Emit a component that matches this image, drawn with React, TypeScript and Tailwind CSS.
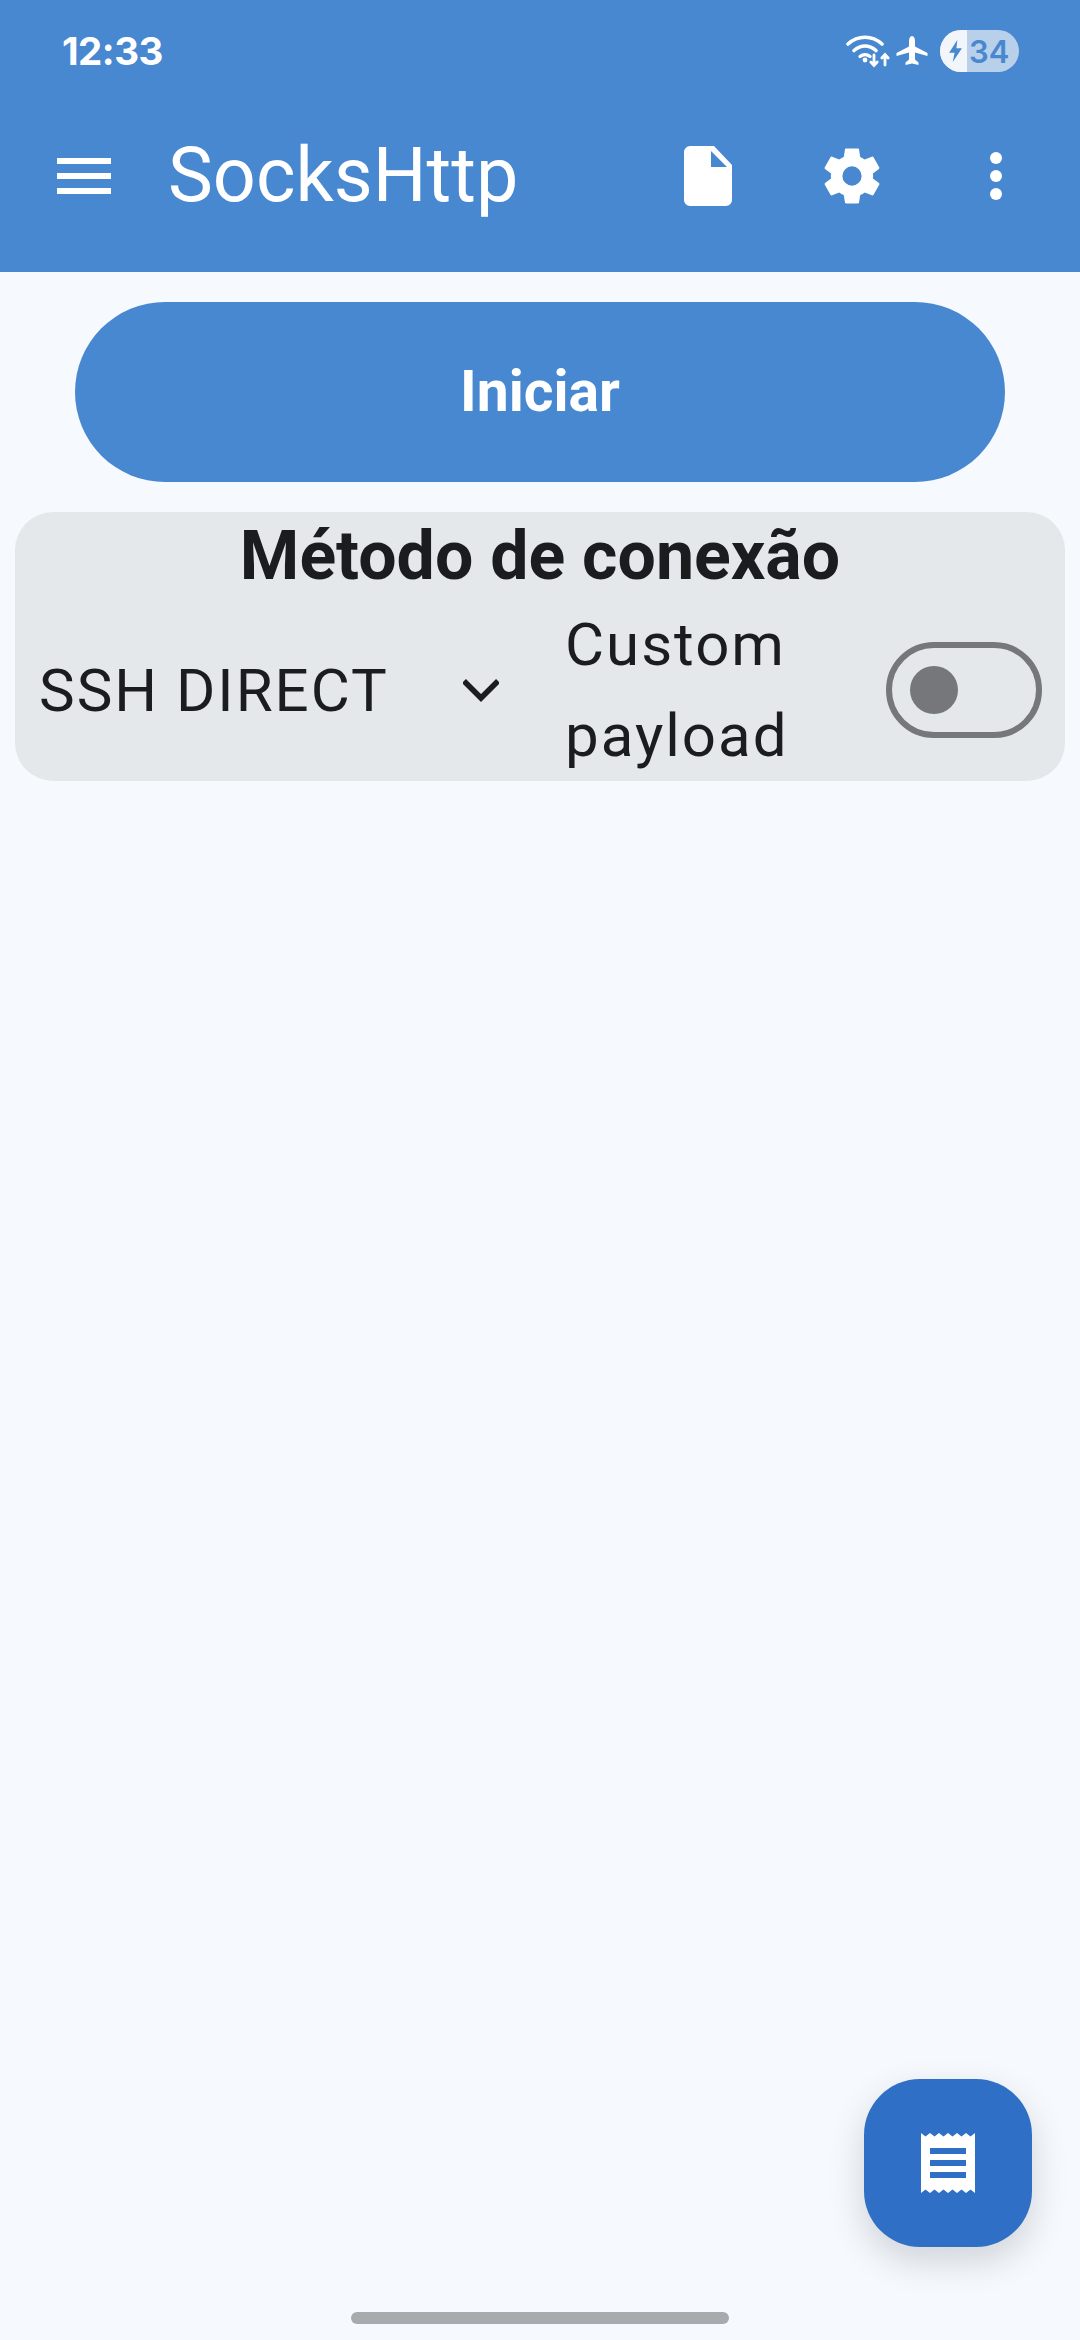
function WifiIcon() {
  return (
    <svg width="45" height="34" viewBox="0 0 45 34" fill="none" stroke="white" strokeLinecap="round">
      <path d="M2 10C12 1 26 1 36 10" strokeWidth="3.6" />
      <path d="M8 16.5C15 10.5 23 10.5 30 16.5" strokeWidth="3.6" />
      <path d="M14 22.5C17 20 21 20 24 22.5" strokeWidth="3.4" />
      <circle cx="19" cy="26" r="2.4" fill="white" stroke="none" />
      <path d="M28 21V31M24.8 28L28 31.5L31.2 28" strokeWidth="2.8" />
      <path d="M39 31V21M35.8 24L39 20.5L42.2 24" strokeWidth="2.8" />
    </svg>
  );
}

function PlaneIcon() {
  return (
    <svg width="32" height="30" viewBox="0 0 32 30" fill="white">
      <path d="M16 0C14 0 13 2.5 13 5V10.5L0.5 17V20L13 16.5V23.5L9.5 26.5V29L16 27.5L22.5 29V26.5L19 23.5V16.5L31.5 20V17L19 10.5V5C19 2.5 18 0 16 0Z" />
    </svg>
  );
}

function Battery() {
  return (
    <div className="ml-[7px] flex h-[42px] w-[79px] items-center overflow-hidden rounded-full bg-[#b9d0eb]">
      <div className="flex h-full w-[27px] items-center justify-end bg-[#f2f6fb] pr-[4px]">
        <svg width="15" height="22" viewBox="0 0 16 24" fill="#4888d0">
          <path d="M10 0L1 14H7L5 24L15 9H9L10 0Z" />
        </svg>
      </div>
      <span className="ml-[2px] font-['Inter',sans-serif] text-[31px] leading-none font-semibold text-[#4888d0]">34</span>
    </div>
  );
}

function StatusBar() {
  return (
    <div className="flex h-[102px] items-center justify-between pr-[61px] pl-[62px]">
      <span className="font-['Inter',sans-serif] text-[38.5px] leading-none font-bold tracking-[-0.5px] text-white">12:33</span>
      <div className="flex items-center gap-[5px]">
        <WifiIcon />
        <PlaneIcon />
        <Battery />
      </div>
    </div>
  );
}

function Toolbar() {
  return (
    <div className="flex h-[148px] items-center pr-[78px] pl-[57px]">
      <svg width="54" height="36" viewBox="0 0 54 36" fill="white">
        <rect x="0" y="0" width="54" height="6" />
        <rect x="0" y="15" width="54" height="6" />
        <rect x="0" y="30" width="54" height="6" />
      </svg>
      <h1 className="ml-[57px] font-['Roboto',sans-serif] text-[75.5px] leading-none font-normal text-white">SocksHttp</h1>
      <div className="ml-auto flex items-center">
        <svg width="48" height="60" viewBox="0 0 48 60" fill="white">
          <path fillRule="evenodd" d="M6 0H30L48 19V54C48 57 45 60 42 60H6C3 60 0 57 0 54V6C0 3 3 0 6 0ZM27 5V21H43L27 5Z" />
        </svg>
        <svg className="ml-[86px]" width="68" height="68" viewBox="0 0 24 24" fill="white">
          <path d="M19.4 12.9a7.6 7.6 0 0 0 0-1.8l2.1-1.6c.2-.2.2-.4.1-.6l-2-3.5c-.1-.2-.4-.3-.6-.2l-2.5 1a7.3 7.3 0 0 0-1.6-.9l-.4-2.6c0-.3-.2-.4-.5-.4h-4c-.3 0-.5.1-.5.4l-.4 2.6c-.6.2-1.1.6-1.6.9l-2.5-1c-.2-.1-.5 0-.6.2l-2 3.5c-.1.2-.1.5.1.6l2.1 1.6a7.6 7.6 0 0 0 0 1.8l-2.1 1.6c-.2.2-.2.4-.1.6l2 3.5c.1.2.4.3.6.2l2.5-1c.5.4 1 .7 1.6.9l.4 2.6c0 .3.2.4.5.4h4c.3 0 .5-.1.5-.4l.4-2.6c.6-.2 1.1-.6 1.6-.9l2.5 1c.2.1.5 0 .6-.2l2-3.5c.1-.2.1-.5-.1-.6l-2.1-1.6ZM12 15.4a3.4 3.4 0 1 1 0-6.8 3.4 3.4 0 0 1 0 6.8Z" />
        </svg>
        <div className="ml-[104px] flex flex-col gap-[6px]">
          <div className="size-[12px] rounded-full bg-white" />
          <div className="size-[12px] rounded-full bg-white" />
          <div className="size-[12px] rounded-full bg-white" />
        </div>
      </div>
    </div>
  );
}

function MethodCard() {
  return (
    <section className="mx-[15px] mt-[30px] h-[269px] rounded-[38px] bg-[#e5e8eb] pt-[5px]">
      <h2 className="text-center font-['Roboto',sans-serif] text-[68px] leading-[78px] font-bold text-[#1b1c1e]">Método de conexão</h2>
      <div className="mt-[4px] flex items-center pl-[24px] font-['Roboto',sans-serif] text-[60px] leading-[91px] tracking-[2px] text-[#1b1c1e]">
        <span className="w-[400px]">SSH DIRECT</span>
        <svg className="ml-[24px]" width="36" height="24" viewBox="0 0 36 24" fill="none" stroke="#1b1c1e" strokeWidth="5.5">
          <path d="M1 3L18 20L35 3" />
        </svg>
        <span className="ml-[66px] w-[321px]">
          Custom
          <br />
          payload
        </span>
        <button className="flex h-[96px] w-[156px] items-center rounded-full border-[6px] border-[#75777b] pl-[18px]">
          <span className="size-[48px] rounded-full bg-[#75777b]" />
        </button>
      </div>
    </section>
  );
}

export default function App() {
  return (
    <div className="relative flex h-[2340px] w-[1080px] flex-col overflow-hidden bg-[#f6fafe]">
      <header className="h-[272px] bg-[#4888d0]">
        <StatusBar />
        <Toolbar />
      </header>

      <button className="mx-auto mt-[30px] h-[180px] w-[930px] rounded-full bg-[#4888d0] font-['Roboto',sans-serif] text-[57px] font-bold text-white">
        Iniciar
      </button>

      <MethodCard />

      <button className="absolute top-[2079px] left-[864px] flex size-[168px] items-center justify-center rounded-[56px] bg-[#2f6fc5] shadow-[0_14px_36px_rgba(0,0,0,0.16)]">
        <svg width="54" height="60" viewBox="0 0 54 60" fill="white">
          <path d="M0 0L4.5 3.5L9 0L13.5 3.5L18 0L22.5 3.5L27 0L31.5 3.5L36 0L40.5 3.5L45 0L49.5 3.5L54 0V60L49.5 56.5L45 60L40.5 56.5L36 60L31.5 56.5L27 60L22.5 56.5L18 60L13.5 56.5L9 60L4.5 56.5L0 60Z" />
          <rect x="9" y="15" width="36" height="6" fill="#2f6fc5" />
          <rect x="9" y="27" width="36" height="6" fill="#2f6fc5" />
          <rect x="9" y="39" width="36" height="6" fill="#2f6fc5" />
        </svg>
      </button>

      <div className="mx-auto mt-auto mb-[16px] h-[12px] w-[378px] rounded-full bg-[#a7abae]" />
    </div>
  );
}
